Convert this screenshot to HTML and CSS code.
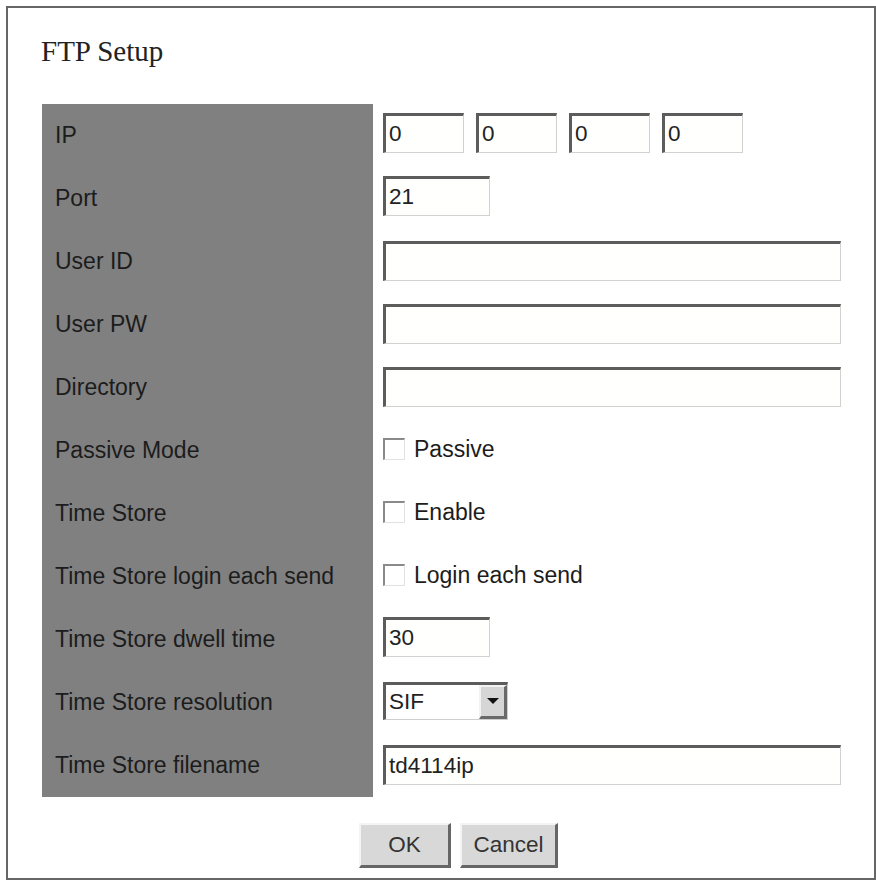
FILE: index.html
```html
<!DOCTYPE html>
<html lang="en">
  <head>
    <meta charset="UTF-8" />
    <meta name="viewport" content="width=device-width, initial-scale=1.0" />
    <title>FTP Setup</title>
    <link rel="stylesheet" href="styles.css">
  </head>
  <body>
    <div class="frame">
      <h1>FTP Setup</h1>
      <div class="form">
        <div class="label">IP</div>
        <div class="field">
          <input class="text ip" type="text" value="0" />
          <input class="text ip" type="text" value="0" />
          <input class="text ip" type="text" value="0" />
          <input class="text ip" type="text" value="0" />
        </div>

        <div class="label">Port</div>
        <div class="field"><input class="text short" type="text" value="21" /></div>

        <div class="label">User ID</div>
        <div class="field"><input class="text wide" type="text" value="" /></div>

        <div class="label">User PW</div>
        <div class="field"><input class="text wide" type="password" value="" /></div>

        <div class="label">Directory</div>
        <div class="field"><input class="text wide" type="text" value="" /></div>

        <div class="label">Passive Mode</div>
        <div class="field">
          <label class="check"><input type="checkbox" /> Passive</label>
        </div>

        <div class="label">Time Store</div>
        <div class="field">
          <label class="check"><input type="checkbox" /> Enable</label>
        </div>

        <div class="label">Time Store login each send</div>
        <div class="field">
          <label class="check"><input type="checkbox" /> Login each send</label>
        </div>

        <div class="label">Time Store dwell time</div>
        <div class="field"><input class="text short" type="text" value="30" /></div>

        <div class="label">Time Store resolution</div>
        <div class="field">
          <div class="select">
            <span class="value">SIF</span>
            <span class="arrow"></span>
          </div>
        </div>

        <div class="label">Time Store filename</div>
        <div class="field"><input class="text wide" type="text" value="td4114ip" /></div>
      </div>
      <div class="buttons">
        <button class="ok">OK</button>
        <button class="cancel">Cancel</button>
      </div>
    </div>
  </body>
</html>
```

FILE: styles.css
```css
body {
  margin: 0;
  padding: 6px 0 0 6px;
  background-color: white;
  font-family: "Liberation Sans", Arial, sans-serif;
}
.frame {
  box-sizing: border-box;
  width: 870px;
  height: 874px;
  border: 2px solid #666;
  padding: 29px 0 0 34px;
  background-color: white;
}
h1 {
  margin: 0 0 38px -1px;
  font-family: "Liberation Serif", "Times New Roman", serif;
  font-weight: normal;
  font-size: 29px;
  line-height: 28.5px;
  color: #222;
}
.form {
  display: grid;
  grid-template-columns: 331px 468px;
  grid-auto-rows: 63px;
}
.label {
  background-color: #808080;
  display: flex;
  align-items: center;
  padding-left: 13px;
  font-size: 23px;
  color: #1c1c1c;
}
.field {
  display: flex;
  align-items: center;
  gap: 12px;
  padding-left: 10px;
}
.text {
  box-sizing: border-box;
  height: 40px;
  margin: 0;
  padding: 0 3px;
  border-top: 3px solid #5c5c5c;
  border-left: 3px solid #5c5c5c;
  border-right: 1px solid #d2d2d2;
  border-bottom: 1px solid #d2d2d2;
  background-color: #fffffd;
  font-family: "Liberation Sans", Arial, sans-serif;
  font-size: 22.5px;
  color: #222;
  outline: none;
}
.ip {
  width: 81px;
  margin-top: -4px;
}
.short {
  width: 107px;
  margin-top: -4px;
}
.wide {
  width: 458px;
}
.check {
  display: flex;
  align-items: center;
  gap: 9px;
  font-size: 23px;
  color: #1c1c1c;
  margin-top: -2px;
}
.check input {
  appearance: none;
  box-sizing: border-box;
  width: 22px;
  height: 22px;
  margin: 0;
  border-top: 2px solid #8a8a8a;
  border-left: 2px solid #8a8a8a;
  border-right: 1px solid #e2e2e2;
  border-bottom: 1px solid #e2e2e2;
  background-color: white;
}
.select {
  box-sizing: border-box;
  width: 125px;
  height: 38px;
  display: flex;
  align-items: stretch;
  border-top: 3px solid #5c5c5c;
  border-left: 3px solid #5c5c5c;
  border-right: 1px solid #cfcfcf;
  border-bottom: 1px solid #cfcfcf;
  background-color: white;
  font-size: 22.5px;
  color: #222;
  margin-top: -3px;
}
.value {
  flex: 1;
  display: flex;
  align-items: center;
  padding-left: 3px;
}
.arrow {
  box-sizing: border-box;
  width: 28px;
  background-color: #d6d6d6;
  border-top: 2px solid #f2f2f2;
  border-left: 2px solid #f2f2f2;
  border-right: 3px solid #6a6a6a;
  border-bottom: 3px solid #6a6a6a;
  display: flex;
  align-items: center;
  justify-content: center;
}
.arrow::after {
  content: "";
  border-left: 6px solid transparent;
  border-right: 6px solid transparent;
  border-top: 6px solid #111;
}
.buttons {
  display: flex;
  gap: 9px;
  margin-top: 26px;
  padding-left: 317px;
}
button {
  box-sizing: border-box;
  height: 45px;
  padding: 0;
  background-color: #d8d8d8;
  border-top: 2px solid #f4f4f4;
  border-left: 2px solid #f4f4f4;
  border-right: 3px solid #666;
  border-bottom: 3px solid #666;
  font-family: "Liberation Sans", Arial, sans-serif;
  font-size: 22.5px;
  color: #333;
  cursor: pointer;
}
.ok {
  width: 92px;
}
.cancel {
  width: 98px;
}
```
